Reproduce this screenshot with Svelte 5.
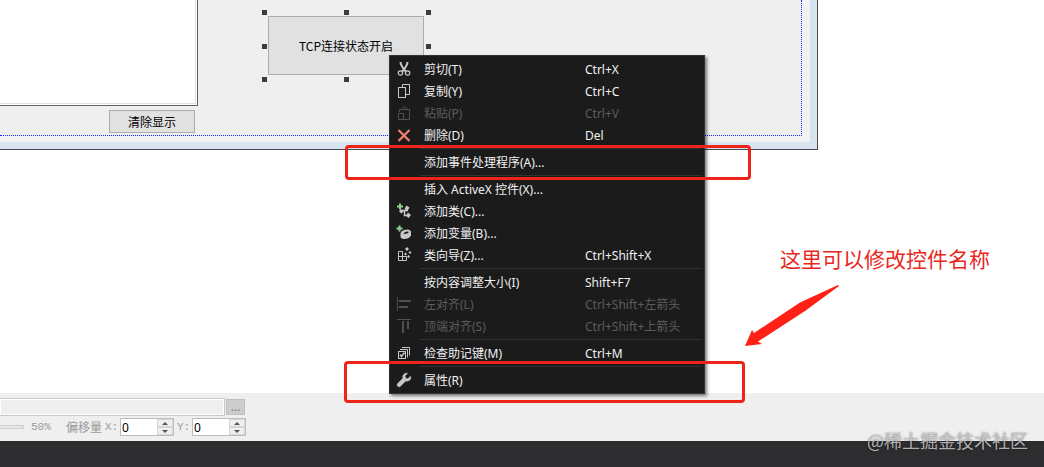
<script>
  let log = '';
  let path = '';
  let zoom = 50;
  let offsets = [
    { axis: 'X', value: '0' },
    { axis: 'Y', value: '0' }
  ];

  const groups = [
    [
      { icon: 'cut', label: '剪切(T)', keys: 'Ctrl+X' },
      { icon: 'copy', label: '复制(Y)', keys: 'Ctrl+C' },
      { icon: 'paste', label: '粘贴(P)', keys: 'Ctrl+V', disabled: true },
      { icon: 'delete', label: '删除(D)', keys: 'Del' }
    ],
    [{ label: '添加事件处理程序(A)...' }],
    [
      { label: '插入 ActiveX 控件(X)...' },
      { icon: 'class', label: '添加类(C)...' },
      { icon: 'variable', label: '添加变量(B)...' },
      { icon: 'wizard', label: '类向导(Z)...', keys: 'Ctrl+Shift+X' }
    ],
    [
      { label: '按内容调整大小(I)', keys: 'Shift+F7' },
      { icon: 'left', label: '左对齐(L)', keys: 'Ctrl+Shift+左箭头', disabled: true },
      { icon: 'top', label: '顶端对齐(S)', keys: 'Ctrl+Shift+上箭头', disabled: true }
    ],
    [{ icon: 'check', label: '检查助记键(M)', keys: 'Ctrl+M' }],
    [{ icon: 'wrench', label: '属性(R)' }]
  ];

  const handles = ['nw', 'n', 'ne', 'w', 'e', 'sw', 's', 'se'];

  function step(i, by) {
    offsets[i].value = String((parseInt(offsets[i].value) || 0) + by);
  }
</script>

<div class="page">
  <main class="workspace">
    <div class="dialog">
      <div class="client">
        <div class="log-column">
          <textarea class="log" aria-label="显示" bind:value={log}></textarea>
          <button class="win-btn clear" on:click={() => log = ''}>清除显示</button>
        </div>
        <div class="selected">
          <button class="win-btn tcp">TCP连接状态开启</button>
          {#each handles as h}
            <span class="handle {h}"></span>
          {/each}
        </div>
      </div>
    </div>

    <div class="menu" role="menu">
      {#each groups as group, i}
        {#if i > 0}<div class="separator" role="separator"></div>{/if}
        {#each group as item}
          <button class="menu-item" role="menuitem" disabled={item.disabled}>
            <span class="menu-icon">
              {#if item.icon}
                <svg width="16" height="16" viewBox="0 0 16 16" fill="none" stroke="currentColor">
                  {#if item.icon === 'cut'}
                    <path d="M4.5 1 Q4.5 4.5 9.8 10.5 M11.5 1 Q11.5 4.5 6.2 10.5" stroke-width="2" />
                    <circle cx="4.4" cy="12" r="2.2" stroke-width="1.2" />
                    <circle cx="11.6" cy="12" r="2.2" stroke-width="1.2" />
                  {:else if item.icon === 'copy'}
                    <path d="M6.5 4.5 V1.5 H13.5 V11.5 H9.5" />
                    <rect x="2.5" y="4.5" width="7" height="10" />
                  {:else if item.icon === 'paste'}
                    <path d="M3.5 7 V4.5 H13.5 V14.5 H8 M6.5 4.5 V3.5 Q8.5 0 10.5 3.5 V4.5" />
                    <rect x="2.5" y="8.5" width="5" height="6" />
                  {:else if item.icon === 'delete'}
                    <path d="M2.5 3 L13.5 14 M13.5 3 L2.5 14" stroke="#f0826c" stroke-width="2.2" />
                  {:else if item.icon === 'class'}
                    <path d="M4 0.5 V6.5 M1 3.5 H7" stroke="#8fd08f" stroke-width="2" />
                    <path d="M6 7.5 H12 M8.5 7.5 V12.5 H12" stroke-width="1.5" />
                    <path d="M5 6 L7.5 8 L5.5 10.5 L3 8.5 Z M10.5 2.5 L13.5 4.5 L11.5 8 L8.5 6 Z M12 9.5 L15 12 L12.5 15 L10 12.5 Z" fill="currentColor" stroke="none" />
                  {:else if item.icon === 'variable'}
                    <path d="M3.5 0.5 V6.5 M0.5 3.5 H6.5" stroke="#8fd08f" stroke-width="2" />
                    <path d="M4.5 8.5 Q5 5 11 4.5 Q15 4.5 15 7 V10.5 Q13 14 8 14 Q4.5 13.5 4.5 11.5 Z" fill="currentColor" stroke="none" />
                    <path d="M7.5 8.3 Q8.5 6.8 11 6.4 Q13.2 6.4 12.6 7.4 Q11.5 8.8 8.8 9 Q7.5 9 7.5 8.3 Z" fill="#1b1b1c" stroke="none" />
                  {:else if item.icon === 'wizard'}
                    <path d="M2.5 4.5 H6.5 V13.5 H2.5 Z M2.5 9.5 H10.5 V13.5 H6.5" />
                    <path d="M11 0 L13 2 L11 4 L9 2 Z M9.5 5.5 L11 7 L9.5 8.5 L8 7 Z M14 4 L15.5 5.5 L14 7 L12.5 5.5 Z M12.5 8 L14 9.5 L12.5 11 L11 9.5 Z" fill="currentColor" stroke="none" />
                  {:else if item.icon === 'left'}
                    <path d="M1.5 1 V15" />
                    <path d="M3 5 H15 M3 11 H12" stroke-width="2" />
                  {:else if item.icon === 'top'}
                    <path d="M1 1.5 H15" />
                    <path d="M7 3 V15 M12 3 V11" stroke-width="2" />
                  {:else if item.icon === 'check'}
                    <path d="M6 2.5 H13.5 V10.5 M4 4.5 H11.5 V12.5" />
                    <rect x="2.5" y="6.5" width="7" height="7" />
                    <path d="M4 9.5 L5.5 11.5 L8.5 7.5" stroke-width="1.5" />
                  {:else if item.icon === 'wrench'}
                    <path d="M14.6 4.2 L11.8 6.8 L9.6 6.2 L9 4 L11.6 1.3 C8.8 0.5 6 3 6.9 6.2 L1.5 11.7 C0.2 13.3 2.5 15.7 4.2 14.4 L9.7 9 C13 9.9 15.7 7 14.6 4.2 Z" fill="currentColor" stroke-width="0.5" />
                  {/if}
                </svg>
              {/if}
            </span>
            <span class="menu-label">{item.label}</span>
            <span class="menu-keys">{item.keys || ''}</span>
          </button>
        {/each}
      {/each}
    </div>

    <div class="mark mark-event"></div>
    <div class="mark mark-props"></div>

    <p class="note">这里可以修改控件名称</p>
    <svg class="arrow" width="96" height="64" viewBox="0 0 96 64">
      <path d="M94 1 L56 18.5 L10 49 L8 46 L1 62 L18 60 L14 57.5 L61 27 L95 2 Z" fill="#ff2116" />
    </svg>
  </main>

  <footer class="toolbar">
    <div class="bar-row">
      <input class="path" type="text" aria-label="原型图像" disabled bind:value={path}>
      <button class="browse" disabled>...</button>
    </div>
    <div class="bar-row">
      <input class="zoom" type="range" aria-label="透明度" disabled bind:value={zoom}>
      <span class="percent">{zoom}%</span>
      <span class="offset-title">偏移量</span>
      {#each offsets as o, i}
        <label class="axis" for="offset-{o.axis}">{o.axis}:</label>
        <span class="spin">
          <input id="offset-{o.axis}" type="text" bind:value={o.value}>
          <span class="spin-btns">
            <button aria-label="增加" on:click={() => step(i, 1)}>
              <svg width="6" height="3" viewBox="0 0 6 3"><path d="M0 3 L3 0 L6 3 Z" fill="#555" /></svg>
            </button>
            <button aria-label="减少" on:click={() => step(i, -1)}>
              <svg width="6" height="3" viewBox="0 0 6 3"><path d="M0 0 L3 3 L6 0 Z" fill="#555" /></svg>
            </button>
          </span>
        </span>
      {/each}
    </div>
  </footer>

  <div class="status"></div>
  <span class="watermark">@稀土掘金技术社区</span>
</div>

<style>
  :global(body) { background: #fff; }

  .page {
    position: relative;
    display: flex;
    flex-direction: column;
    min-height: 100vh;
    overflow: hidden;
    font-family: "Noto Sans", "Noto Sans CJK SC", sans-serif;
    font-size: 12px;
    color: #000;
  }

  button, input, textarea {
    box-sizing: border-box;
    margin: 0;
    font-family: inherit;
    font-size: 12px;
  }

  .workspace {
    position: relative;
    flex: 1;
  }

  .dialog {
    margin-right: 226px;
    padding: 0 15px 13px 0;
    border: solid #4a4a4f;
    border-width: 0 1px 1px 0;
    background: #f2f2f4;
    box-shadow: inset -7px -7px 0 #d7e4f0;
  }

  .client {
    display: flex;
    align-items: flex-start;
    background: #efefef;
    border: dotted #2020ff;
    border-width: 0 1px 1px 0;
  }

  .log-column {
    display: flex;
    flex-direction: column;
    width: 198px;
    padding-bottom: 2px;
  }

  .log {
    height: 106px;
    border: solid #606060;
    border-width: 0 1px 1px 0;
    box-shadow: inset -1px -1px 0 #fff, inset -2px -2px 0 #e0e0e0;
    background: #fff;
    resize: none;
    outline: none;
  }

  .win-btn {
    padding: 0;
    border: 1px solid #adadad;
    background: #e1e1e1;
    color: #000;
    font-family: "Noto Sans CJK SC", sans-serif;
  }

  .clear {
    align-self: flex-end;
    width: 86px;
    height: 23px;
    margin: 4px 3px 0 0;
    line-height: 20px;
  }

  .selected {
    position: relative;
    margin: 16px 0 0 70px;
  }

  .tcp {
    display: block;
    width: 156px;
    height: 59px;
  }

  .handle {
    position: absolute;
    width: 5px;
    height: 5px;
    background: #3c3c3c;
  }

  .nw, .n, .ne { top: -6px; }
  .w, .e { top: 28px; }
  .sw, .s, .se { bottom: -7px; }
  .nw, .w, .sw { left: -6px; }
  .n, .s { left: 76px; }
  .ne, .e, .se { right: -7px; }

  .menu {
    position: absolute;
    left: 389px;
    top: 55px;
    padding: 2px;
    border: 1px solid #333337;
    background: #1b1b1c;
    box-shadow: 2px 2px 3px rgba(0, 0, 0, 0.5);
  }

  .menu-item {
    display: flex;
    align-items: center;
    width: 310px;
    height: 22px;
    padding: 0;
    border: none;
    background: none;
    color: #f1f1f1;
    text-align: left;
    white-space: nowrap;
  }

  .menu-item:hover:enabled { background: #333334; }
  .menu-item:disabled { color: #5c5c5e; }

  .menu-icon {
    display: flex;
    width: 28px;
    padding-left: 4px;
    color: #c8c8c8;
  }

  .menu-item:disabled .menu-icon { color: #505052; }

  .menu-label { width: 161px; }

  .separator {
    height: 1px;
    margin: 2px 1px 2px 28px;
    background: #333337;
  }

  .mark {
    position: absolute;
    box-sizing: border-box;
    border: 3px solid #ee2419;
    border-radius: 4px;
    pointer-events: none;
  }

  .mark-event {
    left: 345px;
    top: 145px;
    width: 406px;
    height: 35px;
  }

  .mark-props {
    left: 344px;
    top: 361px;
    width: 401px;
    height: 42px;
    z-index: 1;
  }

  .note {
    position: absolute;
    left: 780px;
    top: 243px;
    margin: 0;
    color: #e8281c;
    font-family: "Noto Sans CJK SC", sans-serif;
    font-size: 21px;
    line-height: 30px;
    white-space: nowrap;
  }

  .arrow {
    position: absolute;
    left: 744px;
    top: 284px;
  }

  .toolbar {
    display: flex;
    flex-direction: column;
    gap: 2px;
    padding: 5px 0;
    background: #efefef;
    color: #9a9a9a;
  }

  .bar-row {
    display: flex;
    align-items: center;
    height: 18px;
  }

  .path {
    width: 225px;
    height: 18px;
    border: 1px solid #c6c6c6;
    border-left: none;
    box-shadow: inset 0 0 0 1px #fff;
    background: #efefef;
  }

  .browse {
    width: 19px;
    height: 16px;
    margin-left: 1px;
    padding: 0;
    border: 1px solid #bfbfbf;
    background: #cccccc;
    color: #838383;
    line-height: 10px;
  }

  .zoom {
    appearance: none;
    width: 24px;
    height: 4px;
    border: 1px solid #cfcfcf;
    border-left: none;
    background: #e7e7e7;
  }

  .zoom::-webkit-slider-thumb {
    appearance: none;
    width: 0;
    height: 0;
  }

  .percent, .axis {
    font-family: "Liberation Mono", monospace;
    font-size: 11px;
  }

  .percent {
    width: 20px;
    margin-left: 7px;
  }

  .offset-title { margin-left: 15px; }

  .axis {
    width: 15px;
    margin-left: 3px;
  }

  .spin {
    display: flex;
    box-sizing: border-box;
    width: 54px;
    height: 18px;
    border: 1px solid #bdbdbd;
    background: #fff;
  }

  .spin input {
    flex: 1;
    min-width: 0;
    padding: 0 1px;
    border: none;
    background: none;
    outline: none;
  }

  .spin-btns {
    display: flex;
    flex-direction: column;
    width: 16px;
  }

  .spin-btns button {
    display: flex;
    flex: 1;
    align-items: center;
    justify-content: center;
    padding: 0;
    border: 1px solid #d6d6d6;
    background: #efefef;
  }

  .status {
    height: 26px;
    background: #2d2d30;
  }

  .watermark {
    position: absolute;
    right: 16px;
    bottom: 14px;
    color: rgba(215, 215, 215, 0.8);
    font-size: 18px;
    line-height: 26px;
    font-family: "Noto Sans CJK SC", sans-serif;
    text-shadow: 0 0 2px rgba(0, 0, 0, 0.6);
  }
</style>
